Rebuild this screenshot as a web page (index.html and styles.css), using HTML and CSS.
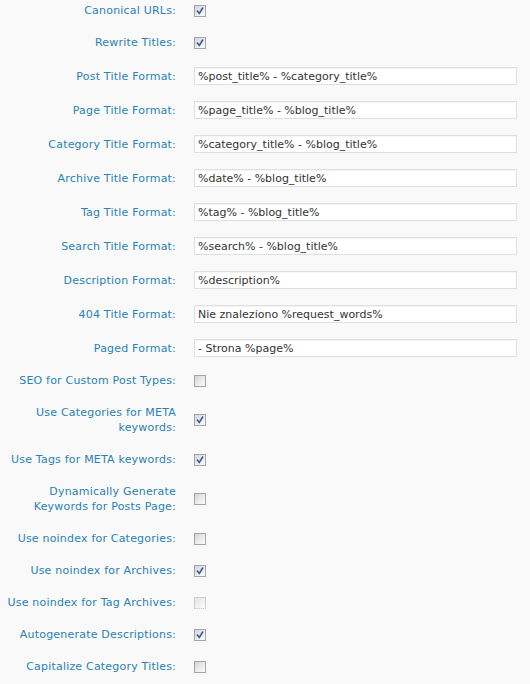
FILE: index.html
```html
<!DOCTYPE html>
<html>
<head>
<meta charset="utf-8">
<link rel="stylesheet" href="styles.css">
</head>
<body>
<div class="form">
  <div class="row"><div class="label">Canonical URLs:</div><div class="field"><span class="cb on"><svg viewBox="0 0 10 10"><path d="M2.5 5.2 L4.3 7.4 L7.6 2.2"/></svg></span></div></div>
  <div class="row"><div class="label">Rewrite Titles:</div><div class="field"><span class="cb on"><svg viewBox="0 0 10 10"><path d="M2.5 5.2 L4.3 7.4 L7.6 2.2"/></svg></span></div></div>
  <div class="row in"><div class="label">Post Title Format:</div><div class="field"><input class="text" type="text" value="%post_title% - %category_title%"></div></div>
  <div class="row in"><div class="label">Page Title Format:</div><div class="field"><input class="text" type="text" value="%page_title% - %blog_title%"></div></div>
  <div class="row in"><div class="label">Category Title Format:</div><div class="field"><input class="text" type="text" value="%category_title% - %blog_title%"></div></div>
  <div class="row in"><div class="label">Archive Title Format:</div><div class="field"><input class="text" type="text" value="%date% - %blog_title%"></div></div>
  <div class="row in"><div class="label">Tag Title Format:</div><div class="field"><input class="text" type="text" value="%tag% - %blog_title%"></div></div>
  <div class="row in"><div class="label">Search Title Format:</div><div class="field"><input class="text" type="text" value="%search% - %blog_title%"></div></div>
  <div class="row in"><div class="label">Description Format:</div><div class="field"><input class="text" type="text" value="%description%"></div></div>
  <div class="row in"><div class="label">404 Title Format:</div><div class="field"><input class="text" type="text" value="Nie znaleziono %request_words%"></div></div>
  <div class="row in"><div class="label">Paged Format:</div><div class="field"><input class="text" type="text" value="- Strona %page%"></div></div>
  <div class="row"><div class="label">SEO for Custom Post Types:</div><div class="field"><span class="cb"></span></div></div>
  <div class="row"><div class="label">Use Categories for META keywords:</div><div class="field"><span class="cb on"><svg viewBox="0 0 10 10"><path d="M2.5 5.2 L4.3 7.4 L7.6 2.2"/></svg></span></div></div>
  <div class="row"><div class="label">Use Tags for META keywords:</div><div class="field"><span class="cb on"><svg viewBox="0 0 10 10"><path d="M2.5 5.2 L4.3 7.4 L7.6 2.2"/></svg></span></div></div>
  <div class="row"><div class="label">Dynamically Generate Keywords for Posts Page:</div><div class="field"><span class="cb"></span></div></div>
  <div class="row"><div class="label">Use noindex for Categories:</div><div class="field"><span class="cb"></span></div></div>
  <div class="row"><div class="label">Use noindex for Archives:</div><div class="field"><span class="cb on"><svg viewBox="0 0 10 10"><path d="M2.5 5.2 L4.3 7.4 L7.6 2.2"/></svg></span></div></div>
  <div class="row"><div class="label">Use noindex for Tag Archives:</div><div class="field"><span class="cb dim"></span></div></div>
  <div class="row"><div class="label">Autogenerate Descriptions:</div><div class="field"><span class="cb on"><svg viewBox="0 0 10 10"><path d="M2.5 5.2 L4.3 7.4 L7.6 2.2"/></svg></span></div></div>
  <div class="row"><div class="label">Capitalize Category Titles:</div><div class="field"><span class="cb"></span></div></div>
</div>
</body>
</html>
```

FILE: styles.css
```css
html, body {
  margin: 0;
  padding: 0;
  background: #f9f9f9;
}
body {
  font-family: "DejaVu Sans", Verdana, sans-serif;
  font-size: 11px;
  line-height: 15px;
  overflow: hidden;
}
.form {
  margin-top: -5px;
  display: flex;
  flex-direction: column;
}
.row {
  display: grid;
  grid-template-columns: 184px 1fr;
  align-items: center;
  padding: 8px 0 9px;
}
.row.in {
  padding: 8px 0 8px;
}
.label {
  color: #2a82b4;
  text-align: right;
  letter-spacing: 0.2px;
  padding: 0 8px 0 6px;
}
.field {
  padding: 0 13px 0 10px;
  display: flex;
  align-items: center;
}
.text {
  box-sizing: border-box;
  width: 100%;
  height: 18px;
  margin: 0;
  padding: 0 3px;
  border: 1px solid #dfdfdf;
  border-radius: 0;
  background: #fff;
  color: #333;
  font-family: "DejaVu Sans", Verdana, sans-serif;
  font-size: 11px;
  box-shadow: inset 0 1px 1px rgba(0,0,0,0.04);
}
.cb {
  box-sizing: border-box;
  width: 12px;
  height: 12px;
  border: 1px solid #a5a5a5;
  background: linear-gradient(135deg, #d4d4d4 0%, #ececec 55%, #fbfbfb 100%);
  display: block;
}
.cb svg {
  display: block;
  width: 10px;
  height: 10px;
}
.cb svg path {
  fill: none;
  stroke: #3b57a6;
  stroke-width: 1.6;
  stroke-linecap: square;
}
.cb.dim {
  border-color: #cfcfcf;
  border-bottom-style: dotted;
  background: linear-gradient(135deg, #e4e4e4 0%, #f2f2f2 60%, #fcfcfc 100%);
}
```
